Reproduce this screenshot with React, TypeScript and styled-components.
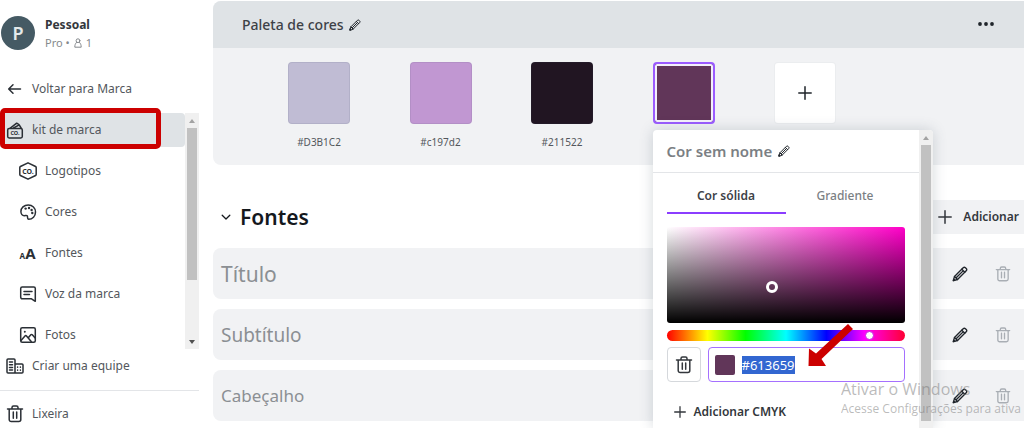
import React, { useEffect, useRef } from "react";
import styled, { createGlobalStyle } from "styled-components";

const GlobalStyle = createGlobalStyle`
  *, *::before, *::after { box-sizing: border-box; }
  body {
    margin: 0;
    background: #fff;
    color: #53575c;
    font-family: "Noto Sans", "Open Sans", sans-serif;
    font-size: 12px;
    line-height: 18px;
  }
  button, input { font: inherit; color: inherit; }
  button { border: 0; padding: 0; background: none; cursor: pointer; }
  h1, h2, p, ul { margin: 0; padding: 0; font-weight: inherit; font-size: inherit; }
  ul { list-style: none; }
  a { color: inherit; text-decoration: none; }
  svg { display: block; flex: none; }
`;

/* ---------- icons ---------- */

const Icon = styled.svg.attrs({ "aria-hidden": true })<{ $size?: number }>`
  width: ${(p) => p.$size ?? 18}px;
  height: ${(p) => p.$size ?? 18}px;
  fill: none;
  stroke: currentColor;
  stroke-width: 1.5;
  stroke-linecap: round;
  stroke-linejoin: round;
`;

const Glyph = styled.text`
  fill: currentColor;
  stroke: none;
  font-family: "Noto Sans", sans-serif;
  font-weight: 700;
`;

const PencilIcon = ({ size = 12 }: { size?: number }) => (
  <Icon $size={size} viewBox="0 0 18 18">
    <path d="M1.500 16.500l1.300-4.700L12.600 2a1.800 1.800 0 0 1 2.500 0l.9.9a1.800 1.800 0 0 1 0 2.500L6.200 15.200z" />
    <path d="M2.800 11.800l3.400 3.400M11 3.600l3.400 3.400M5 13l7.500-7.500M1.500 16.500l1.600-.4-1.200-1.200z" />
  </Icon>
);

const TrashIcon = ({ size = 18 }: { size?: number }) => (
  <Icon $size={size} viewBox="0 0 18 18">
    <path d="M1.500 4h15M3.200 4v10.600a2 2 0 0 0 2 2h7.600a2 2 0 0 0 2-2V4M6 3.800V2.600a1.500 1.500 0 0 1 1.500-1.500h3A1.500 1.500 0 0 1 12 2.600v1.200M7.300 7v6.300M10.700 7v6.300" />
  </Icon>
);

const PlusIcon = ({ size = 14 }: { size?: number }) => (
  <Icon $size={size} viewBox="0 0 14 14">
    <path d="M7 .8v12.400M.8 7h12.400" />
  </Icon>
);

const BackIcon = () => (
  <Icon viewBox="0 0 18 18">
    <path d="M14.500 9H2.800M7 4.700L2.700 9 7 13.300" />
  </Icon>
);

const BrandKitIcon = () => (
  <Icon viewBox="0 0 18 18">
    <rect x="1.700" y="7.600" width="14.600" height="9.400" rx="1.400" />
    <path d="M4.300 7.200l6.400-5 2.300 1.400M7.600 7l5.600-3.200 1.900 3.200" />
    <Glyph x="4.400" y="14.400" fontSize="5.500">CO.</Glyph>
  </Icon>
);

const LogoIcon = () => (
  <Icon viewBox="0 0 18 18">
    <path d="M9 .8l7.600 3.700c.4.2.6.5.6.9v7.200c0 .4-.2.7-.6.9L9 17.200l-7.600-3.700a1 1 0 0 1-.6-.9V5.400c0-.4.2-.7.6-.9z" />
    <Glyph x="3.200" y="11.500" fontSize="7">CO.</Glyph>
  </Icon>
);

const PaletteIcon = () => (
  <Icon viewBox="0 0 18 18">
    <path d="M9.300 2C5 2 1.900 4.900 1.900 8.600c0 2.300 1.500 4.100 3.300 4.100 1.500 0 2.300-.6 3 .1.800.9-.4 3.300 1.400 3.500 3.900 0 6.900-3.100 6.900-7.300C16.500 5 13.400 2 9.300 2z" />
    <g fill="currentColor" stroke="none">
      <circle cx="6.600" cy="5.600" r="1.200" />
      <circle cx="10" cy="5" r="1.200" />
      <circle cx="12.600" cy="7" r="1.200" />
      <circle cx="13.300" cy="10" r="1.200" />
    </g>
  </Icon>
);

const FontsIcon = () => (
  <Icon viewBox="0 0 18 18">
    <Glyph x="0.500" y="15" fontSize="8">A</Glyph>
    <Glyph x="6.200" y="15" fontSize="15">A</Glyph>
  </Icon>
);

const VoiceIcon = () => (
  <Icon viewBox="0 0 18 18">
    <path d="M3.200 2h11.600a1.500 1.500 0 0 1 1.500 1.500V16.300L12.500 13.800H3.200a1.500 1.500 0 0 1-1.500-1.500V3.500A1.500 1.500 0 0 1 3.200 2zM5 6.400h8M5 9.600h5.500" />
  </Icon>
);

const PhotoIcon = () => (
  <Icon viewBox="0 0 18 18">
    <rect x="1.700" y="1.700" width="14.600" height="14.600" rx="1.500" />
    <path d="M2 14.500l4-4.600a1 1 0 0 1 1.500 0l4.700 5.700M9.300 11.800l2.500-3a1 1 0 0 1 1.500 0l2.900 3.300" />
    <circle cx="5.800" cy="5.800" r="1" fill="currentColor" stroke="none" />
  </Icon>
);

const TeamIcon = () => (
  <Icon viewBox="0 0 18 18">
    <path d="M9 16H2a1 1 0 0 1-1-1V3a1 1 0 0 1 1-1h6a1 1 0 0 1 1 1zM9 7h7a1 1 0 0 1 1 1v7a1 1 0 0 1-1 1H9z" />
    <path d="M3.500 5h3M3.500 7.700h3M3.500 10.400h3M3.500 13.100h3M11.600 10v.3M14.400 10v.3M11.600 13v.3M14.400 13v.3" />
  </Icon>
);

const PersonIcon = () => (
  <Icon $size={10} viewBox="0 0 10 10">
    <g strokeWidth="1">
      <circle cx="5" cy="2.700" r="1.900" />
      <path d="M3.500 4.400C2.300 5.600 1.800 7 1.800 9.200h6.400c0-2.200-.5-3.600-1.700-4.800" />
    </g>
  </Icon>
);

const ChevronIcon = () => (
  <Icon $size={10} viewBox="0 0 10 10">
    <path d="M1.200 3.200L5 7l3.800-3.800" strokeWidth="1.300" />
  </Icon>
);

const MoreIcon = () => (
  <Icon viewBox="0 0 18 18">
    <g fill="currentColor" stroke="none">
      <circle cx="3" cy="8" r="1.900" />
      <circle cx="9" cy="8" r="1.900" />
      <circle cx="15" cy="8" r="1.900" />
    </g>
  </Icon>
);

/* ---------- scrollbar ---------- */

const Track = styled.div`
  flex: none;
  width: 14px;
  padding: 0 2px;
  display: flex;
  flex-direction: column;
  background: #f0f0f0;
`;

const Thumb = styled.div<{ $length: number }>`
  height: ${(p) => p.$length}px;
  background: #c1c1c1;
`;

const TrackArrow = styled.svg<{ $end?: boolean }>`
  width: 10px;
  height: 15px;
  margin-top: ${(p) => (p.$end ? "auto" : "0")};
`;

const ScrollBar = ({ length, end }: { length: number; end?: boolean }) => (
  <Track aria-hidden>
    <TrackArrow viewBox="0 0 10 15">
      <path d="M2 10l3-4 3 4z" fill="#a3a3a3" />
    </TrackArrow>
    <Thumb $length={length} />
    {end && (
      <TrackArrow viewBox="0 0 10 15" $end>
        <path d="M2 6l3 4 3-4z" fill="#505050" />
      </TrackArrow>
    )}
  </Track>
);

/* ---------- sidebar ---------- */

const Shell = styled.div`
  position: relative;
  display: flex;
  gap: 14px;
  height: 100vh;
  overflow: hidden;
`;

const Sidebar = styled.nav`
  flex: none;
  width: 199px;
  display: flex;
  flex-direction: column;
`;

const Account = styled.div`
  flex: none;
  display: flex;
  gap: 10px;
  padding: 16px 0 20px 1px;
`;

const Avatar = styled.div`
  width: 34px;
  height: 34px;
  border-radius: 50%;
  display: grid;
  place-items: center;
  background: #455a64;
  color: #e4e9eb;
  font-size: 18px;
  font-weight: 600;
`;

const AccountName = styled.p`
  color: #33373c;
  font-weight: 700;
`;

const AccountPlan = styled.p`
  display: flex;
  align-items: center;
  gap: 3px;
  color: #85898d;
  font-size: 11px;
`;

const NavLink = styled.a<{ $nested?: boolean; $active?: boolean }>`
  flex: none;
  display: flex;
  align-items: center;
  gap: 8px;
  height: 34px;
  padding-left: ${(p) => (p.$nested ? 19 : 6)}px;
  border-radius: 0 4px 4px 0;
  background: ${(p) => (p.$active ? "#dfe3e6" : "transparent")};
  svg { color: #2a2f35; }
`;

const KitScroller = styled.div`
  flex: none;
  position: relative;
  display: flex;
  height: 236px;
  margin-top: 7px;
`;

const KitList = styled.ul`
  flex: 1;
  display: flex;
  flex-direction: column;
  gap: 7px;
  overflow: hidden;
`;

const Marker = styled.div`
  position: absolute;
  top: -5px;
  left: 0;
  width: 161px;
  height: 41px;
  border: 5px solid #cc0000;
  border-radius: 5px;
`;

const Divider = styled.hr`
  flex: none;
  width: 100%;
  height: 1px;
  margin: 7px 0 6px;
  border: 0;
  background: #e3e5e8;
`;

/* ---------- main ---------- */

const Main = styled.main`
  flex: 1;
  min-width: 0;
  padding-top: 1px;
`;

const Panel = styled.section`
  border-radius: 8px 0 0 8px;
  background: #f1f2f4;
`;

const PanelHeader = styled.header`
  display: flex;
  align-items: center;
  gap: 5px;
  height: 47px;
  padding: 0 29px;
  border-radius: 8px 0 0 0;
  background: #dfe3e6;
  color: #3d4147;
`;

const PanelTitle = styled.h2`
  font-size: 14px;
  font-weight: 500;
`;

const IconButton = styled.button<{ $muted?: boolean; $end?: boolean }>`
  display: grid;
  place-items: center;
  margin-left: ${(p) => (p.$end ? "auto" : "0")};
  color: ${(p) => (p.$muted ? "#a9aeb4" : "#1f242a")};
`;

const Swatches = styled.ul`
  display: flex;
  justify-content: space-between;
  max-width: 623px;
  height: 117px;
  padding: 14px 0 0 75px;
`;

const SwatchItem = styled.li`
  position: relative;
  width: 62px;
  display: flex;
  flex-direction: column;
  align-items: center;
  gap: 10px;
  font-size: 10px;
  line-height: 16px;
`;

const Swatch = styled.button<{ $color: string; $selected?: boolean }>`
  width: 62px;
  height: 62px;
  display: grid;
  place-items: center;
  border: ${(p) => (p.$selected ? "2px solid #9b5cff" : "1px solid rgba(57, 76, 96, 0.1)")};
  border-radius: 4px;
  background: ${(p) => p.$color};
  box-shadow: ${(p) => (p.$selected ? "inset 0 0 0 2px #f4f0fa" : "none")};
  color: #1f242a;
`;

const FontsHeader = styled.div`
  display: flex;
  align-items: center;
  justify-content: space-between;
  height: 34px;
  margin: 35px 0 14px;
  padding-left: 8px;
`;

const FontsTitle = styled.h1`
  display: flex;
  align-items: center;
  gap: 9px;
  color: #14181d;
  font-size: 21px;
  font-weight: 600;
  line-height: 28px;
`;

const AddButton = styled.button`
  display: flex;
  align-items: center;
  gap: 11px;
  height: 34px;
  padding: 0 5px 0 16px;
  background: #f1f2f4;
  color: #33373c;
  font-size: 12px;
  font-weight: 600;
`;

const FontRows = styled.ul`
  display: flex;
  flex-direction: column;
  gap: 10px;
`;

const FontRow = styled.li<{ $size: number }>`
  display: flex;
  align-items: center;
  gap: 27px;
  height: 51px;
  padding: 0 13px 0 8px;
  border-radius: 8px 0 0 8px;
  background: #f1f2f4;
  color: #8b8f93;
  font-size: ${(p) => p.$size}px;
  line-height: 28px;
`;

/* ---------- colour popover ---------- */

const Popover = styled.div`
  position: absolute;
  z-index: 2;
  top: 68px;
  left: 0;
  display: flex;
  width: 280px;
  min-height: calc(100vh - 130px);
  overflow: hidden;
  border-radius: 4px 4px 0 0;
  background: #fff;
  box-shadow: 0 0 14px rgba(57, 76, 96, 0.22);
  font-size: 12px;
  line-height: 18px;
`;

const PopoverBody = styled.div`
  flex: 1;
`;

const ColorName = styled.div`
  display: flex;
  align-items: center;
  gap: 6px;
  height: 43px;
  padding-left: 14px;
  border-bottom: 1px solid #e3e5e8;
  color: #7b7f84;
  font-size: 15px;
  font-weight: 600;
`;

const Picker = styled.div`
  display: flex;
  flex-direction: column;
  padding: 6px 14px;
`;

const Tabs = styled.div`
  display: flex;
  height: 35px;
  margin-bottom: 13px;
`;

const Tab = styled.button<{ $active?: boolean }>`
  flex: 1;
  border-bottom: 2px solid ${(p) => (p.$active ? "#8b3dff" : "transparent")};
  color: ${(p) => (p.$active ? "#3d4147" : "#7b7f84")};
  font-weight: ${(p) => (p.$active ? 600 : 500)};
`;

const Spectrum = styled.div`
  position: relative;
  height: 96px;
  border-radius: 3px;
  background: linear-gradient(to top, #000, transparent), linear-gradient(to right, #fff, #ff00c8);
`;

const SpectrumHandle = styled.div`
  position: absolute;
  width: 12px;
  height: 12px;
  margin: -6px 0 0 -6px;
  border: 3px solid #fff;
  border-radius: 50%;
`;

const Hue = styled.input`
  appearance: none;
  width: 100%;
  height: 11px;
  margin: 7px 0 6px;
  border-radius: 6px;
  background: linear-gradient(to right, #f00, #ff0 17%, #0f0 33%, #0ff 50%, #00f 67%, #f0f 83%, #f03);
  &::-webkit-slider-thumb {
    appearance: none;
    width: 9px;
    height: 9px;
    border: 1px solid #c81ee0;
    border-radius: 50%;
    background: #fff;
  }
`;

const HexRow = styled.div`
  display: flex;
  gap: 7px;
  height: 35px;
`;

const DeleteButton = styled.button`
  display: grid;
  place-items: center;
  width: 34px;
  border: 1px solid #d5d8dc;
  border-radius: 4px;
  color: #33373c;
`;

const HexField = styled.label`
  flex: 1;
  display: flex;
  align-items: center;
  gap: 7px;
  padding: 0 6px;
  border: 1px solid #a570ff;
  border-radius: 4px;
`;

const HexChip = styled.span`
  width: 20px;
  height: 20px;
  border-radius: 2px;
  background: #613659;
`;

const HexInput = styled.input`
  width: 120px;
  padding: 0;
  border: 0;
  outline: 0;
  background: none;
  font-size: 13px;
  &::selection {
    background: #3267d1;
    color: #fff;
  }
`;

const CmykButton = styled.button`
  display: flex;
  align-items: center;
  gap: 8px;
  margin-top: 21px;
  padding-left: 7px;
  color: #33373c;
  font-weight: 600;
`;

const PointerArrow = styled.svg`
  position: absolute;
  top: 193px;
  left: 154px;
  width: 48px;
  height: 44px;
  pointer-events: none;
`;

const Watermark = styled.div`
  position: absolute;
  z-index: 3;
  right: 0;
  bottom: 10px;
  width: 183px;
  overflow: hidden;
  white-space: nowrap;
  color: rgba(120, 120, 120, 0.5);
  font-family: "Open Sans", sans-serif;
  font-size: 12px;
  line-height: 18px;
  pointer-events: none;
`;

const WatermarkTitle = styled.p`
  font-size: 16px;
  line-height: 22px;
`;

const kitItems = [
  { label: "Logotipos", icon: <LogoIcon /> },
  { label: "Cores", icon: <PaletteIcon /> },
  { label: "Fontes", icon: <FontsIcon /> },
  { label: "Voz da marca", icon: <VoiceIcon /> },
  { label: "Fotos", icon: <PhotoIcon /> },
];

const palette = [
  { label: "#D3B1C2", color: "#c0bcd4" },
  { label: "#c197d2", color: "#c197d2" },
  { label: "#211522", color: "#211522" },
];

const fontStyles = [
  { label: "Título", size: 21 },
  { label: "Subtítulo", size: 19 },
  { label: "Cabeçalho", size: 17 },
];

function ColorPopover() {
  const hex = useRef<HTMLInputElement>(null);

  useEffect(() => {
    hex.current?.focus({ preventScroll: true });
    hex.current?.select();
  }, []);

  return (
    <Popover role="dialog" aria-label="Cor sem nome">
      <PopoverBody>
        <ColorName>
          Cor sem nome
          <IconButton aria-label="Editar nome"><PencilIcon /></IconButton>
        </ColorName>
        <Picker>
          <Tabs role="tablist">
            <Tab role="tab" aria-selected $active>Cor sólida</Tab>
            <Tab role="tab" aria-selected={false}>Gradiente</Tab>
          </Tabs>
          <Spectrum>
            <SpectrumHandle style={{ left: "44.5%", top: "62%" }} />
          </Spectrum>
          <Hue type="range" min={0} max={360} defaultValue={312} aria-label="Matiz" />
          <HexRow>
            <DeleteButton aria-label="Excluir cor"><TrashIcon /></DeleteButton>
            <HexField>
              <HexChip />
              <HexInput ref={hex} defaultValue="#613659" aria-label="Código hexadecimal" spellCheck={false} />
            </HexField>
          </HexRow>
          <CmykButton><PlusIcon size={12} />Adicionar CMYK</CmykButton>
        </Picker>
      </PopoverBody>
      <ScrollBar length={276} />
      <PointerArrow viewBox="0 0 48 44" aria-hidden>
        <path d="M41 1l5 5-31.500 30 4.500 7H1.500L2 25.500l7 5z" fill="#cc0000" />
      </PointerArrow>
    </Popover>
  );
}

export default function App() {
  return (
    <Shell>
      <GlobalStyle />
      <Sidebar>
        <Account>
          <Avatar>P</Avatar>
          <div>
            <AccountName>Pessoal</AccountName>
            <AccountPlan>Pro • <PersonIcon /> 1</AccountPlan>
          </div>
        </Account>
        <NavLink href="#marca"><BackIcon />Voltar para Marca</NavLink>
        <KitScroller>
          <KitList>
            <li><NavLink href="#kit" $active><BrandKitIcon />kit de marca</NavLink></li>
            {kitItems.map((item) => (
              <li key={item.label}>
                <NavLink href={`#${item.label}`} $nested>{item.icon}{item.label}</NavLink>
              </li>
            ))}
          </KitList>
          <ScrollBar length={152} end />
          <Marker />
        </KitScroller>
        <NavLink href="#equipe"><TeamIcon />Criar uma equipe</NavLink>
        <Divider />
        <NavLink href="#lixeira"><TrashIcon />Lixeira</NavLink>
      </Sidebar>

      <Main>
        <Panel>
          <PanelHeader>
            <PanelTitle>Paleta de cores</PanelTitle>
            <IconButton aria-label="Editar paleta"><PencilIcon /></IconButton>
            <IconButton aria-label="Mais opções" $end><MoreIcon /></IconButton>
          </PanelHeader>
          <Swatches>
            {palette.map((entry) => (
              <SwatchItem key={entry.label}>
                <Swatch $color={entry.color} aria-label={entry.label} />
                {entry.label}
              </SwatchItem>
            ))}
            <SwatchItem>
              <Swatch $color="#613659" $selected aria-label="#613659" />
              <ColorPopover />
            </SwatchItem>
            <SwatchItem>
              <Swatch $color="#fff" aria-label="Adicionar cor"><PlusIcon /></Swatch>
            </SwatchItem>
          </Swatches>
        </Panel>

        <FontsHeader>
          <FontsTitle><ChevronIcon />Fontes</FontsTitle>
          <AddButton><PlusIcon />Adicionar</AddButton>
        </FontsHeader>
        <FontRows>
          {fontStyles.map((style) => (
            <FontRow key={style.label} $size={style.size}>
              {style.label}
              <IconButton aria-label={`Editar ${style.label}`} $end><PencilIcon size={16} /></IconButton>
              <IconButton aria-label={`Excluir ${style.label}`} $muted><TrashIcon size={16} /></IconButton>
            </FontRow>
          ))}
        </FontRows>
      </Main>

      <Watermark>
        <WatermarkTitle>Ativar o Windows</WatermarkTitle>
        <p>Acesse Configurações para ativa</p>
      </Watermark>
    </Shell>
  );
}
